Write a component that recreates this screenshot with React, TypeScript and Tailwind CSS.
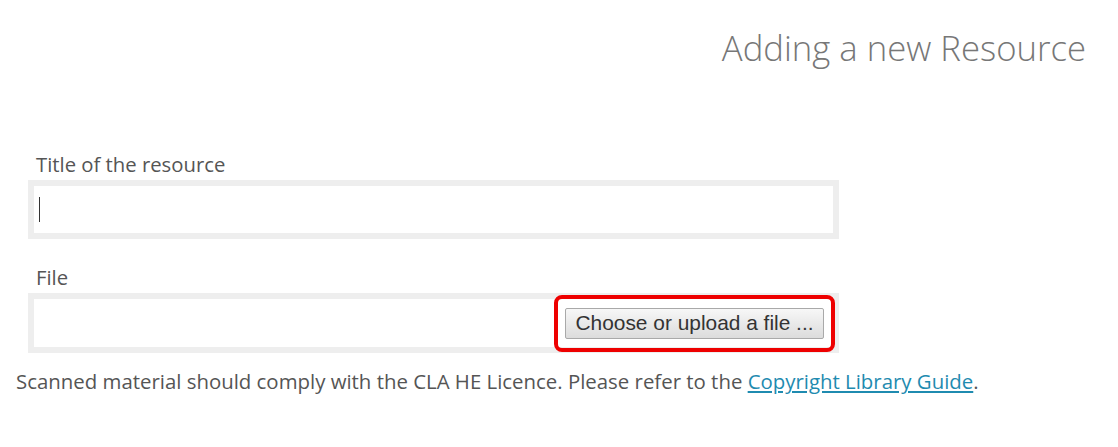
export default function App() {
  return (
    <div
      className="w-[1118px] h-[447px] bg-white relative"
      style={{ fontFamily: '"Open Sans", sans-serif' }}
    >
      <div className="flex justify-end pr-[32px] pt-[24px]">
        <h1 className="text-[34.7px] font-light text-[#777] leading-[48px]">
          Adding a new Resource
        </h1>
      </div>

      <div className="pl-[28px] pt-[80px] w-[839px]">
        <label className="block pl-[8px] text-[20.3px] text-[#555] leading-[24px]">
          Title of the resource
        </label>
        <div className="mt-[4px] h-[59px] border-[6px] border-[#eeeeee] bg-white flex items-center pl-[5px]">
          <span className="w-px h-[25px] bg-[#333]" />
        </div>

        <label className="block pl-[8px] mt-[26px] text-[20.3px] text-[#555] leading-[24px]">
          File
        </label>
        <div className="mt-[4px] h-[60px] border-[6px] border-[#eeeeee] bg-white flex items-center justify-end pr-[9px]">
          <div className="relative">
            <button
              className="h-[31px] w-[259px] border border-[#a9a9a9] rounded-[2px] bg-gradient-to-b from-[#f7f7f7] to-[#dcdcdc] text-[20.9px] text-[#333] leading-none whitespace-nowrap"
              style={{ fontFamily: '"Liberation Sans", Arial, sans-serif' }}
            >
              Choose or upload a file ...
            </button>
            <div className="absolute -left-[11px] -top-[13px] -right-[11px] -bottom-[13px] border-[4px] border-[#ee0000] rounded-[8px] pointer-events-none" />
          </div>
        </div>
      </div>

      <p className="pl-[16px] mt-[16px] text-[20.4px] text-[#555] leading-[24px]">
        Scanned material should comply with the CLA HE Licence. Please refer to the{" "}
        <a href="#" className="text-[#1f8bb0] underline">
          Copyright Library Guide
        </a>
        .
      </p>
    </div>
  );
}
